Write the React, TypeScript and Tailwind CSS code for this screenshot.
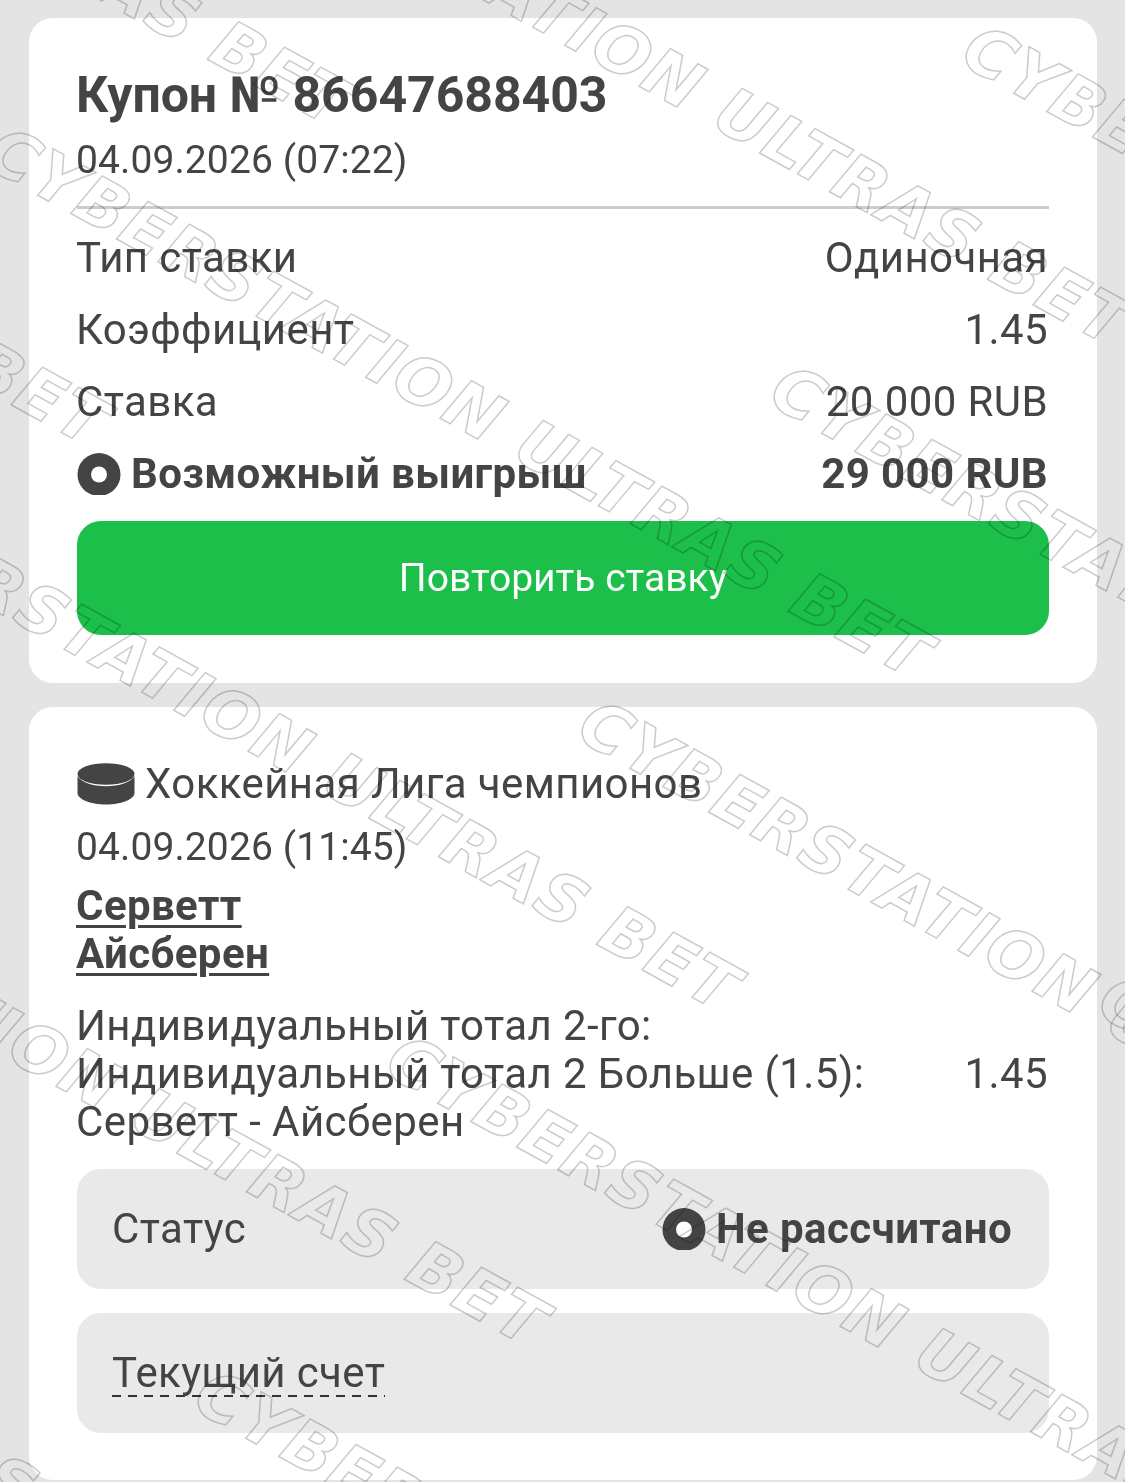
import React from "react";

const marks = [
  "left-[8px] top-[117px]",
  "left-[-184px] top-[450px]",
  "left-[-376px] top-[785px]",
  "left-[207px] top-[-215px]",
  "left-[792px] top-[355px]",
  "left-[600px] top-[690px]",
  "left-[408px] top-[1025px]",
  "left-[216px] top-[1360px]",
  "left-[984px] top-[15px]",
  "left-[-815px] top-[-115px]",
  "left-[-573px] top-[-435px]",
  "left-[1120px] top-[965px]",
  "left-[-735px] top-[1035px]",
];

function Dot() {
  return (
    <svg width="44" height="42" viewBox="0 0 44 42" className="shrink-0">
      <circle cx="22" cy="21.5" r="21.5" fill="#444444" />
      <circle cx="22" cy="21.5" r="8" fill="#ffffff" />
    </svg>
  );
}

function Puck() {
  return (
    <svg width="58" height="44" viewBox="0 0 58 44" className="ml-[1px] shrink-0">
      <ellipse cx="29" cy="12" rx="28.5" ry="10.8" fill="#444444" />
      <path d="M0.5 14C4 20.500 16 24.300 29 24.300S54 20.500 57.500 14V31C57.500 37 45 42.500 29 42.500S0.5 37 0.5 31Z" fill="#444444" />
    </svg>
  );
}

function Row({ label, value }: { label: string; value: string }) {
  return (
    <div className="flex h-[72px] items-center justify-between">
      <span>{label}</span>
      <span>{value}</span>
    </div>
  );
}

export default function App() {
  return (
    <div className="relative h-[1482px] overflow-hidden bg-[#e4e4e4] pl-[29px] pr-[28px] pt-[18px] font-['Roboto',sans-serif] text-[42px] leading-[48px] tracking-[0.4px] text-[#444444]">
      <div className="rounded-[24px] bg-white pb-[48px] pl-[47px] pr-[49px] pt-[41px]">
        <div className="text-[50px] font-bold leading-[72px] tracking-[-0.05px]">Купон № 86647688403</div>
        <div className="mt-[5px] text-[39px] tracking-[0.1px]">04.09.2026 (07:22)</div>
        <div className="-mr-[1px] ml-[1px] mt-[22px] h-[3px] bg-[#cccccc]" />
        <div className="mt-[13px]">
          <Row label="Тип ставки" value="Одиночная" />
          <Row label="Коэффициент" value="1.45" />
          <Row label="Ставка" value="20 000 RUB" />
          <div className="flex h-[72px] items-center justify-between font-bold">
            <span className="ml-[1px] flex items-center gap-[10px]">
              <Dot />
              Возможный выигрыш
            </span>
            <span>29 000 RUB</span>
          </div>
        </div>
        <button className="-mr-[1px] ml-[1px] mt-[11px] flex h-[114px] w-[972px] items-center justify-center rounded-[24px] bg-[#1bbf4a] text-[39px] tracking-normal text-white">
          Повторить ставку
        </button>
      </div>

      <div className="mt-[24px] rounded-[24px] bg-white pb-[47px] pl-[47px] pr-[49px] pt-[53px]">
        <div className="flex items-center gap-[10px]">
          <Puck />
          Хоккейная Лига чемпионов
        </div>
        <div className="mt-[15px] text-[39px] tracking-[0.1px]">04.09.2026 (11:45)</div>
        <div className="mt-[11px] font-bold underline decoration-[3px] underline-offset-[5px]">
          Серветт
          <br />
          Айсберен
        </div>
        <div className="mt-[24px] flex items-center justify-between">
          <span>
            Индивидуальный тотал 2-го:
            <br />
            Индивидуальный тотал 2 Больше (1.5):
            <br />
            Серветт - Айсберен
          </span>
          <span>1.45</span>
        </div>
        <div className="-mr-[1px] ml-[1px] mt-[23px] flex h-[120px] items-center justify-between rounded-[24px] bg-[#e9e9e9] pl-[35px] pr-[37px]">
          <span>Статус</span>
          <span className="flex items-center gap-[10px] font-bold">
            <Dot />
            Не рассчитано
          </span>
        </div>
        <div className="-mr-[1px] ml-[1px] mt-[24px] flex h-[120px] items-center rounded-[24px] bg-[#e9e9e9] pl-[35px] pr-[37px]">
          <span>
            Текущий счет
            <span className="-mt-[2px] block h-[2px] bg-[repeating-linear-gradient(90deg,#333333_0_9px,transparent_9px_16px)]" />
          </span>
        </div>
      </div>

      {marks.map((m) => (
        <span
          key={m}
          className={`pointer-events-none absolute ${m} origin-top-left rotate-[29deg] whitespace-nowrap font-['DejaVu_Sans',sans-serif] text-[66px] font-bold italic leading-[64px] tracking-[2px] text-transparent mix-blend-multiply [-webkit-text-stroke:1.5px_#d2c8d2]`}
        >
          CYBERSTATION ULTRAS BET
        </span>
      ))}
    </div>
  );
}
